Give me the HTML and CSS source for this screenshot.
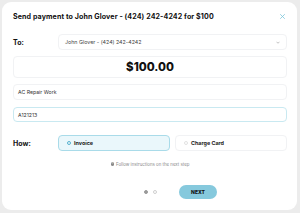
FILE: index.html
```html
<!DOCTYPE html>
<html>
<head>
<meta charset="utf-8">
<link rel="stylesheet" href="styles.css">
</head>
<body>
<div class="modal">
  <div class="header">
    <h1 class="title">Send payment to John Glover - (424) 242-4242 for $100</h1>
    <svg class="close" width="5" height="5" viewBox="0 0 10 10"><path d="M1 1L9 9M9 1L1 9" stroke="#7cc5db" stroke-width="1.6" stroke-linecap="round"/></svg>
  </div>
  <div class="row to-row">
    <div class="label">To:</div>
    <div class="select">
      <span>John Glover - (424) 242-4242</span>
      <svg class="chev" width="4" height="3" viewBox="0 0 8 5"><path d="M1 1L4 4L7 1" fill="none" stroke="#999" stroke-width="1.2"/></svg>
    </div>
  </div>
  <div class="amount">$100.00</div>
  <div class="field">AC Repair Work</div>
  <div class="field focus">A121213</div>
  <div class="row how-row">
    <div class="label">How:</div>
    <div class="options">
      <div class="opt active"><span class="radio"></span><span>Invoice</span></div>
      <div class="opt"><span class="radio"></span><span>Charge Card</span></div>
    </div>
  </div>
  <div class="hint"><span class="info">i</span><span>Follow instructions on the next step</span></div>
  <div class="footer">
    <div class="dots"><span class="dot on"></span><span class="dot"></span></div>
    <button class="next">NEXT</button>
  </div>
</div>
</body>
</html>
```
FILE: styles.css
```css
html, body {
  margin: 0;
  padding: 0;
  background: #ececec;
  font-family: "Inter", "Open Sans", sans-serif;
  color: #1d1d1f;
}
.modal {
  box-sizing: border-box;
  margin: 2px 0 0 2px;
  width: 295px;
  height: 208px;
  background: #fff;
  border-radius: 9px;
  padding: 7px 10px 0 11px;
}
.header {
  height: 14px;
  display: flex;
  align-items: center;
  justify-content: space-between;
}
.title {
  margin: 0;
  font-size: 7.1px;
  font-weight: 700;
  letter-spacing: 0.1px;
  color: #111;
}
.close {
  margin-right: 2px;
}
.row {
  display: flex;
  align-items: center;
}
.label {
  width: 45px;
  font-size: 7px;
  font-weight: 700;
  color: #111;
}
.to-row {
  margin-top: 11px;
  height: 16px;
}
.select {
  flex: 1;
  box-sizing: border-box;
  height: 16px;
  border: 1px solid #f1f2f4;
  border-radius: 4px;
  display: flex;
  align-items: center;
  justify-content: space-between;
  padding: 0 6px 0 6px;
  font-size: 5.3px;
  color: #444;
}
.amount {
  margin-top: 6px;
  box-sizing: border-box;
  height: 22px;
  border: 1px solid #f1f2f4;
  border-radius: 4px;
  display: flex;
  align-items: center;
  justify-content: center;
  font-size: 11.5px;
  font-weight: 800;
  color: #111;
}
.field {
  margin-top: 6px;
  box-sizing: border-box;
  height: 16px;
  border: 1px solid #f1f2f4;
  border-radius: 4px;
  display: flex;
  align-items: center;
  padding-left: 4px;
  font-size: 5.2px;
  color: #333;
}
.field.focus {
  margin-top: 7px;
  height: 15px;
  border-color: #c9e9f1;
}
.how-row {
  margin-top: 13px;
  height: 16px;
}
.options {
  flex: 1;
  display: flex;
  gap: 5px;
}
.opt {
  flex: 1;
  box-sizing: border-box;
  height: 16px;
  border: 1px solid #f1f2f4;
  border-radius: 4px;
  display: flex;
  align-items: center;
  padding-left: 8px;
  font-size: 5.4px;
  font-weight: 700;
  color: #222;
}
.opt.active {
  background: #eaf7fb;
  border-color: #a9dbe9;
}
.radio {
  box-sizing: border-box;
  width: 4px;
  height: 4px;
  border-radius: 50%;
  border: 1px solid #e2e2e2;
  margin-right: 3px;
}
.opt.active .radio {
  border-color: #58b2cf;
}
.hint {
  margin-top: 9px;
  height: 8px;
  display: flex;
  align-items: center;
  justify-content: center;
  font-size: 4.4px;
  color: #8a8a8a;
}
.info {
  width: 3.5px;
  height: 3.5px;
  border-radius: 50%;
  background: #8a8a8a;
  color: #fff;
  font-size: 3px;
  line-height: 3.5px;
  text-align: center;
  margin-right: 2px;
}
.footer {
  margin-top: 17px;
  height: 14px;
  display: flex;
  align-items: center;
  gap: 22px;
  padding-left: 131px;
}
.dots {
  display: flex;
  gap: 5px;
  align-items: center;
}
.dot {
  box-sizing: border-box;
  width: 4px;
  height: 4px;
  border-radius: 50%;
  border: 1px solid #cfcfcf;
}
.dot.on {
  background: #9a9a9a;
  border-color: #9a9a9a;
}
.next {
  width: 38px;
  height: 14px;
  border: none;
  border-radius: 7px;
  background: #86c9dd;
  font-family: inherit;
  font-size: 5px;
  font-weight: 800;
  color: #111;
  padding: 0;
}
```
